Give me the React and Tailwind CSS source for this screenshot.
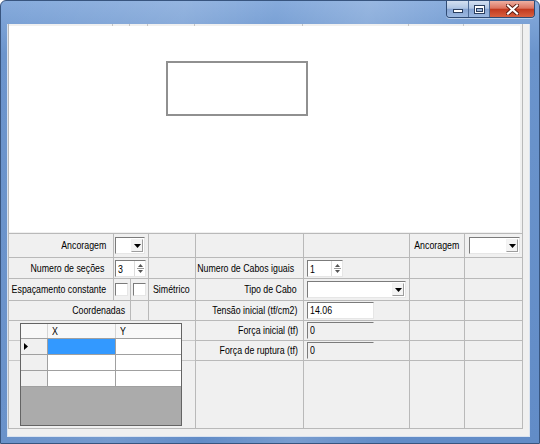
import React from 'react';

// Classic WinForms 3D sunken box (textbox / combo / spinner frame)
function Sunken({ className = '', children }) {
  return (
    <div
      className={`flex items-center border border-t-[#7b7b7b] border-l-[#7b7b7b] border-r-[#e6e6e6] border-b-[#e6e6e6] ${className}`}
    >
      {children}
    </div>
  );
}

function Cell({ className = '', children }) {
  return (
    <div className={`flex items-center border-r border-b border-[#b9b9b9] ${className}`}>
      {children}
    </div>
  );
}

// narrow dialog font: Liberation Sans squeezed to the width of the old sans serif
function Label({ children, right, className = '' }) {
  return (
    <span
      className={`inline-block scale-x-[0.8] whitespace-nowrap text-[11px] leading-none text-black ${right ? 'origin-right' : 'origin-left'} ${className}`}
    >
      {children}
    </span>
  );
}

function Combo({ className = '' }) {
  return (
    <Sunken className={`h-[17px] justify-end bg-white pr-[1px] ${className}`}>
      <div className="flex h-[13px] w-[12px] items-center justify-center border border-[#f2f2f2] border-r-[#9d9d9d] border-b-[#9d9d9d] bg-[#f4f4f4]">
        <svg width="7" height="4" viewBox="0 0 7 4">
          <path d="M0 0h7L3.5 4z" fill="#000" />
        </svg>
      </div>
    </Sunken>
  );
}

function Spin({ value, className = '' }) {
  return (
    <Sunken className={`h-[17px] bg-white ${className}`}>
      <div className="flex-1 pl-[2px]">
        <Label>{value}</Label>
      </div>
      <div className="flex h-full w-[11px] flex-col items-center justify-center gap-[1px] border-l border-[#dcdcdc]">
        <svg width="5" height="3" viewBox="0 0 5 3">
          <path d="M2.5 0L5 3H0z" fill="#555" />
        </svg>
        <div className="h-px w-[7px] bg-[#9a9a9a]" />
        <svg width="5" height="3" viewBox="0 0 5 3">
          <path d="M0 0h5L2.5 3z" fill="#555" />
        </svg>
      </div>
    </Sunken>
  );
}

function TextBox({ value, disabled, className = '' }) {
  return (
    <Sunken
      className={`h-[17px] pl-[2px] ${disabled ? 'bg-[#f0f0f0] border-r-[#f0f0f0] border-b-[#f0f0f0]' : 'bg-white'} ${className}`}
    >
      <Label className={disabled ? 'text-[#8a8a8a]' : ''}>{value}</Label>
    </Sunken>
  );
}

function CheckBox({ className = '' }) {
  return <Sunken className={`h-[13px] w-[13px] bg-white ${className}`} />;
}

function WindowButtons() {
  const glass =
    'bg-[linear-gradient(180deg,#d3e0f1_0%,#b0c6e4_45%,#86a4d2_52%,#9bb8e0_100%)]';
  return (
    <div className="flex h-[17px] overflow-hidden rounded-b-[4px] border border-t-0 border-[#2f4b74] shadow-[0_1px_0_rgba(255,255,255,0.45)]">
      <div className={`flex w-[22px] items-end justify-center border-r border-[#4d6b97] pb-[4px] ${glass}`}>
        <div className="h-[4px] w-[10px] border border-[#2a3e5e] bg-white" />
      </div>
      <div className={`flex w-[21px] items-center justify-center border-r border-[#4d6b97] ${glass}`}>
        <div className="h-[9px] w-[11px] border border-[#2a3e5e] bg-white p-[1px] pt-[2px]">
          <div className="h-full w-full border border-[#2a3e5e] bg-[#9fb8db]" />
        </div>
      </div>
      <div className="flex w-[44px] items-center justify-center bg-[linear-gradient(180deg,#eeb0a2_0%,#dc7460_45%,#c23a1f_52%,#d9603f_100%)]">
        <svg width="13" height="11" viewBox="0 0 13 11">
          <path d="M2 1.5l9 8M11 1.5l-9 8" stroke="#5a1a10" strokeWidth="4" strokeLinecap="square" />
          <path d="M2 1.5l9 8M11 1.5l-9 8" stroke="#fff" strokeWidth="2.2" strokeLinecap="square" />
        </svg>
      </div>
    </div>
  );
}

function CoordGrid() {
  const rows = [0, 1, 2];
  return (
    <div className="mt-[2px] flex h-[103px] w-[162px] shrink-0 flex-col self-start border border-[#646464] bg-[#ababab]">
      <div className="grid h-[15px] grid-cols-[27px_68px_1fr] border-b border-[#a0a0a0] bg-[#f8f8f8]">
        <div className="border-r border-[#d5d5d5]" />
        <div className="flex items-center border-r border-[#d5d5d5] pl-[4px]">
          <Label>X</Label>
        </div>
        <div className="flex items-center pl-[4px]">
          <Label>Y</Label>
        </div>
      </div>
      {rows.map((r) => (
        <div key={r} className="grid h-[16px] grid-cols-[27px_68px_1fr] border-b border-[#a0a0a0]">
          <div className="flex items-center border-r border-[#a0a0a0] bg-[#f0f0f0] pl-[3px]">
            {r === 0 && (
              <svg width="4" height="7" viewBox="0 0 4 7">
                <path d="M0 0l4 3.5L0 7z" fill="#000" />
              </svg>
            )}
          </div>
          <div className={`border-r border-[#a0a0a0] ${r === 0 ? 'bg-[#3399ff]' : 'bg-white'}`} />
          <div className="bg-white" />
        </div>
      ))}
    </div>
  );
}

export default function App() {
  return (
    <div className="h-[444px] w-[540px] overflow-hidden bg-white font-['Liberation_Sans',Arial,sans-serif]">
      <div className="flex h-full w-full flex-col rounded-t-[6px] border border-[#38557f] bg-[linear-gradient(100deg,rgba(255,255,255,0)_0%,rgba(255,255,255,0.12)_30%,rgba(255,255,255,0)_45%,rgba(255,255,255,0.15)_60%,rgba(255,255,255,0)_75%),linear-gradient(180deg,#86abdc_0%,#6b94cc_12%,#628cc7_100%)]">
        {/* title bar */}
        <div className="flex h-[23px] shrink-0 justify-end pr-[4px]">
          <WindowButtons />
        </div>

        {/* client area */}
        <div className="mb-[6px] ml-[6px] mr-[9px] flex-1 border border-t-0 border-[#d9e3f0] bg-[#f0f0f0]">
          <div className="grid w-[515px] grid-cols-[105px_17px_18px_47px_108px_106px_55px_58px] grid-rows-[210px_24px_21px_22px_20px_20px_20px_68px] border-l border-[#b9b9b9]">
            {/* drawing panel */}
            <div className="col-span-8 flex flex-col border-r border-b border-[#b9b9b9]">
              <div className="grid h-[2px] grid-cols-[104px_17px_18px_47px_108px_106px_55px_57px]">
                <div className="border-r border-[#c4c4c4]" />
                <div className="border-r border-[#c4c4c4]" />
                <div className="border-r border-[#c4c4c4]" />
                <div className="border-r border-[#c4c4c4]" />
                <div className="border-r border-[#c4c4c4]" />
                <div className="border-r border-[#c4c4c4]" />
                <div className="border-r border-[#c4c4c4]" />
                <div />
              </div>
              <div className="mb-[1px] mr-[2px] flex-1 bg-white pl-[157px] pt-[35px]">
                <div className="h-[55px] w-[142px] border-2 border-[#909090]" />
              </div>
            </div>

            {/* row 1 */}
            <Cell className="justify-end pr-[7px]">
              <Label right>Ancoragem</Label>
            </Cell>
            <Cell className="col-span-2 pl-[1px]">
              <Combo className="w-[30px]" />
            </Cell>
            <Cell />
            <Cell />
            <Cell />
            <Cell className="justify-end pr-[5px]">
              <Label right>Ancoragem</Label>
            </Cell>
            <Cell className="pl-[4px]">
              <Combo className="w-[51px]" />
            </Cell>

            {/* row 2 */}
            <Cell className="justify-end pr-[9px]">
              <Label right>Numero de seções</Label>
            </Cell>
            <Cell className="col-span-2 pl-[1px]">
              <Spin value="3" className="w-[31px]" />
            </Cell>
            <Cell />
            <Cell className="justify-end pr-[9px]">
              <Label right>Numero de Cabos iguais</Label>
            </Cell>
            <Cell className="pl-[3px]">
              <Spin value="1" className="w-[36px]" />
            </Cell>
            <Cell />
            <Cell />

            {/* row 3 */}
            <Cell className="justify-end pr-[7px]">
              <Label right>Espaçamento constante</Label>
            </Cell>
            <Cell className="pl-[1px]">
              <CheckBox />
            </Cell>
            <Cell className="pl-[2px]">
              <CheckBox />
            </Cell>
            <Cell className="pl-[4px]">
              <Label>Simétrico</Label>
            </Cell>
            <Cell className="justify-end pr-[6px]">
              <Label right>Tipo de Cabo</Label>
            </Cell>
            <Cell className="pl-[3px]">
              <Combo className="w-[99px]" />
            </Cell>
            <Cell />
            <Cell />

            {/* row 4 */}
            <Cell className="col-span-2 justify-end pr-[5px]">
              <Label right>Coordenadas</Label>
            </Cell>
            <Cell />
            <Cell />
            <Cell className="justify-end pr-[6px]">
              <Label right>Tensão inicial (tf/cm2)</Label>
            </Cell>
            <Cell className="pl-[3px]">
              <TextBox value="14.06" className="w-[67px]" />
            </Cell>
            <Cell />
            <Cell />

            {/* rows 5-7: coordinates grid on the left */}
            <div className="col-span-4 row-span-3 flex items-start border-r border-b border-[#b9b9b9]">
              <div className="flex h-full w-[11px] shrink-0 flex-col">
                <div className="h-[20px] border-b border-[#c8c8c8]" />
                <div className="h-[20px] border-b border-[#c8c8c8]" />
              </div>
              <CoordGrid />
              <div className="flex h-full flex-1 flex-col">
                <div className="h-[20px] border-b border-[#c8c8c8]" />
                <div className="h-[20px] border-b border-[#c8c8c8]" />
              </div>
            </div>
            <Cell className="justify-end pr-[5px]">
              <Label right>Força inicial (tf)</Label>
            </Cell>
            <Cell className="pl-[3px]">
              <TextBox value="0" disabled className="w-[67px]" />
            </Cell>
            <Cell />
            <Cell />

            <Cell className="justify-end pr-[5px]">
              <Label right>Força de ruptura (tf)</Label>
            </Cell>
            <Cell className="pl-[3px]">
              <TextBox value="0" disabled className="w-[67px]" />
            </Cell>
            <Cell />
            <Cell />

            <Cell />
            <Cell />
            <Cell />
            <Cell />
          </div>
        </div>
      </div>
    </div>
  );
}
